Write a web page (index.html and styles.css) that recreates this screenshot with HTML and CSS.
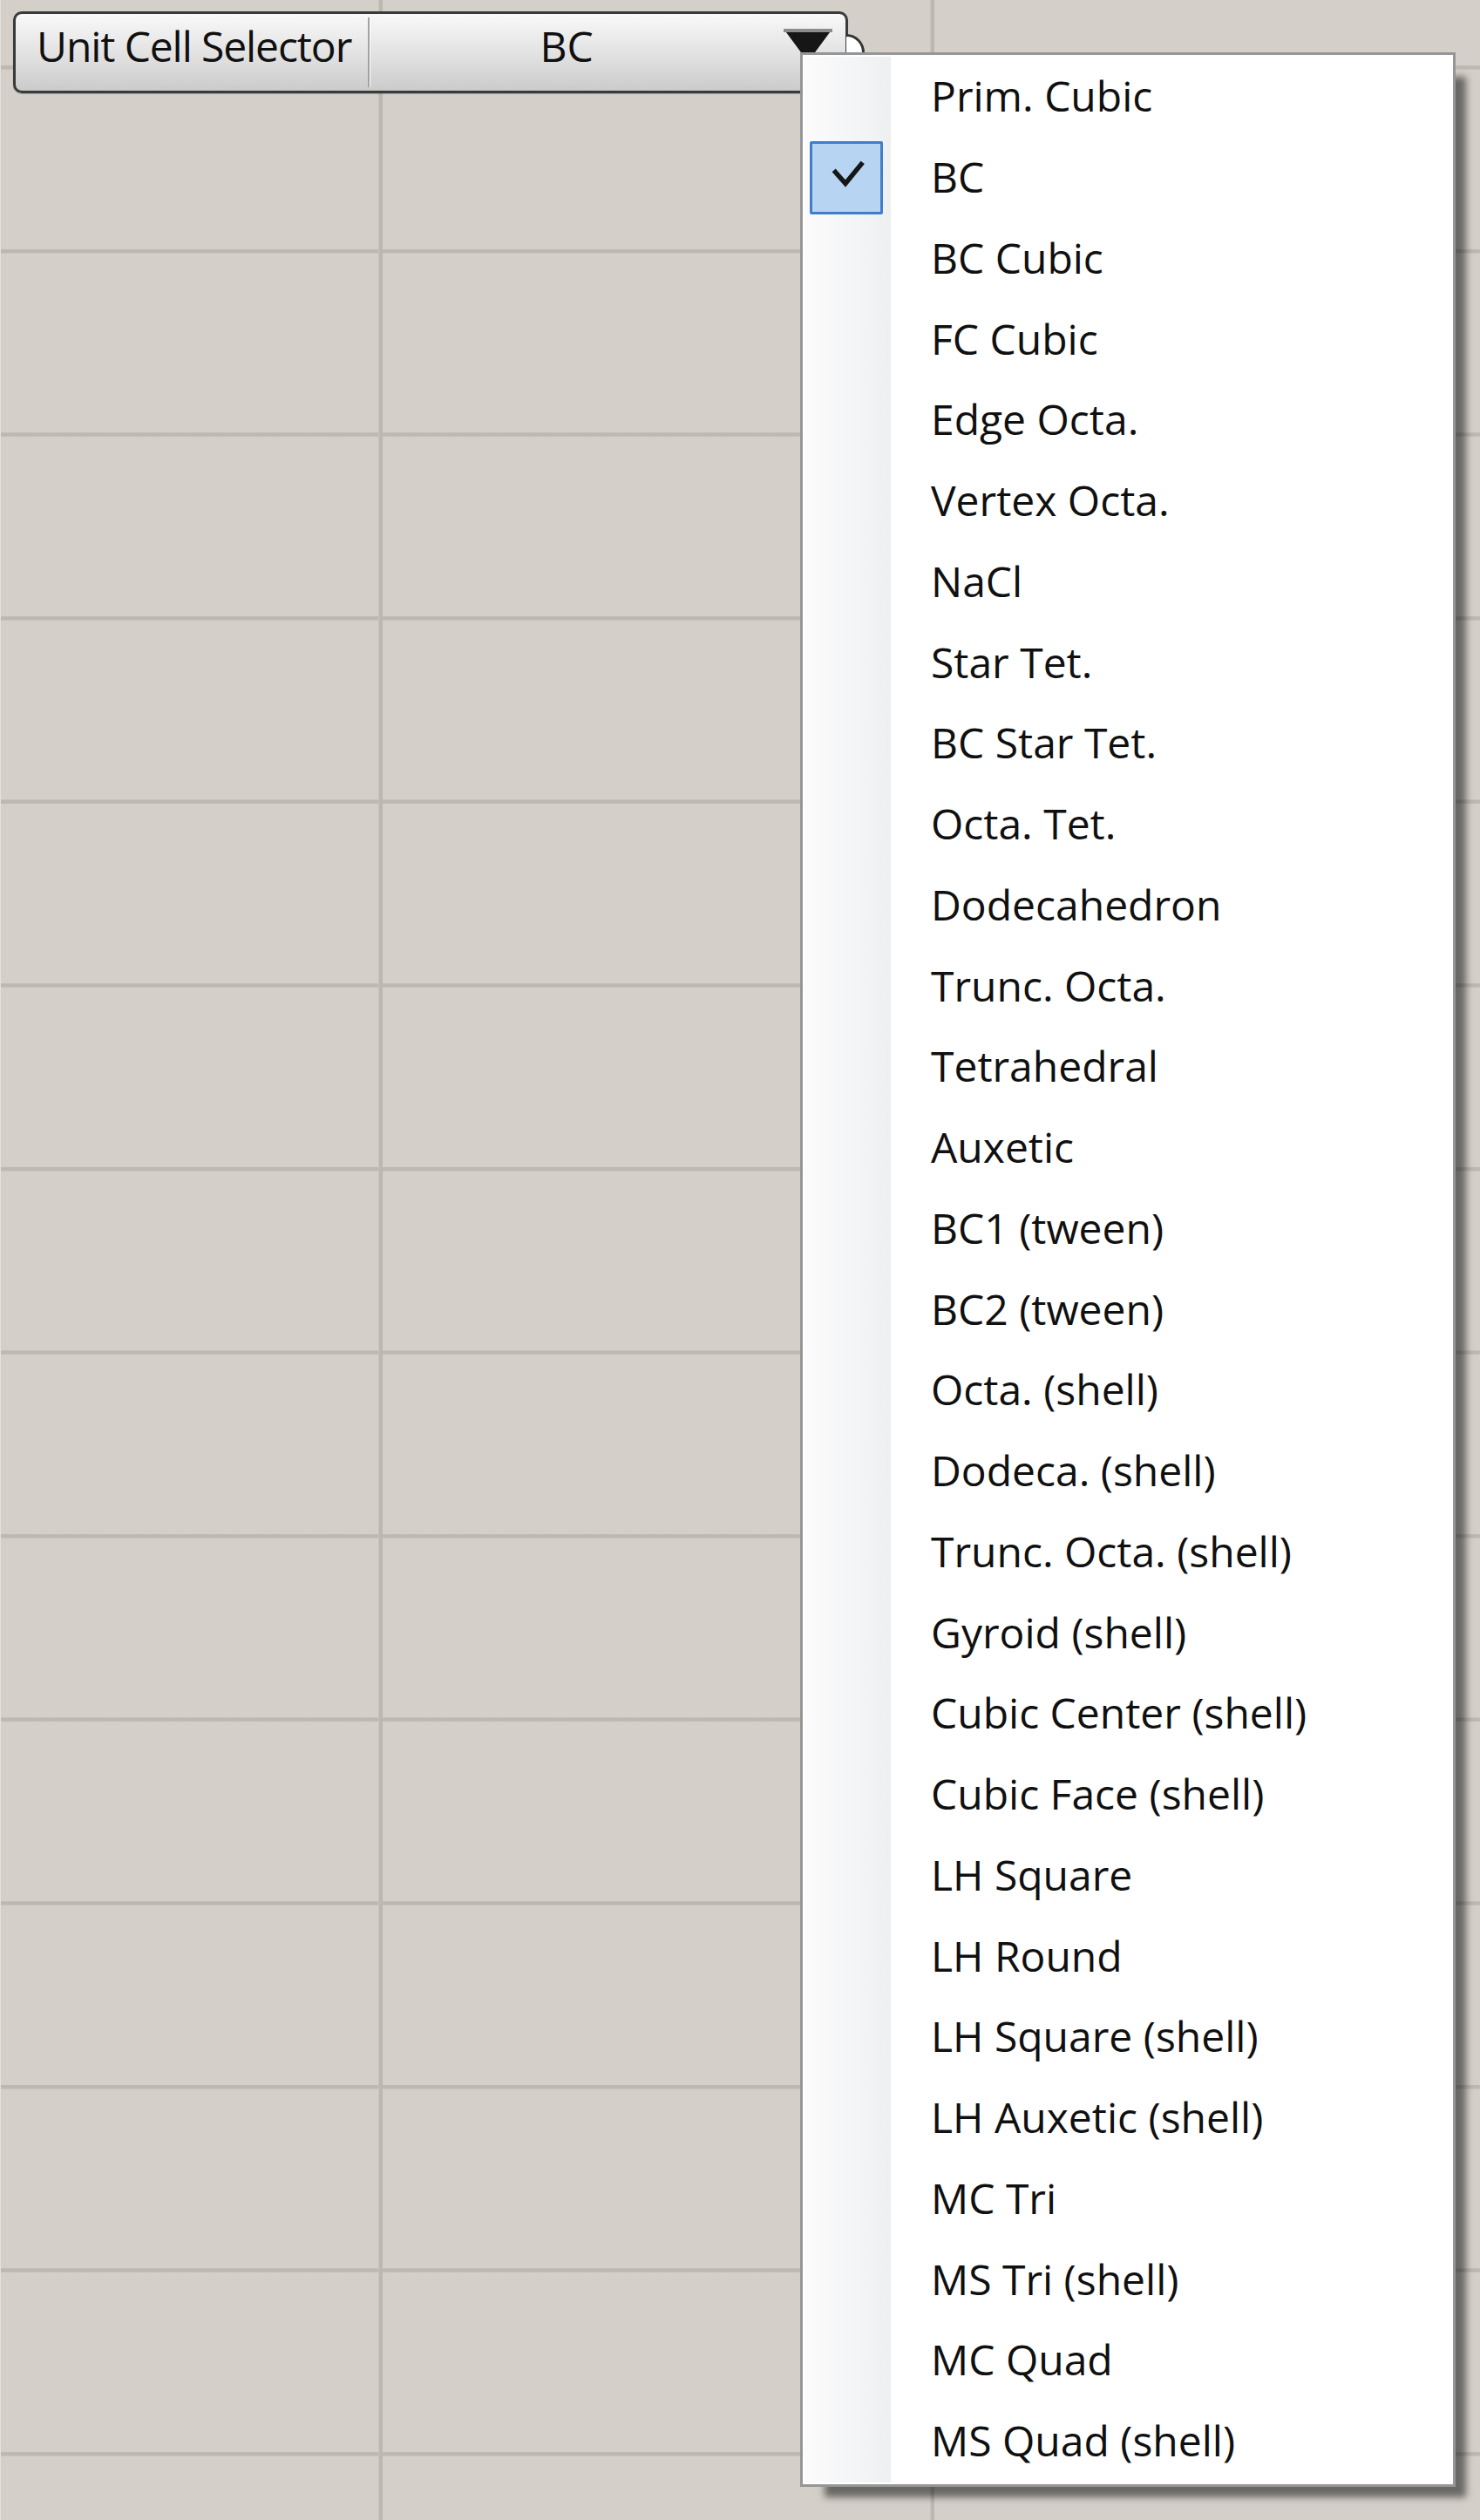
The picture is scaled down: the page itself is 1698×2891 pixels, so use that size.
FILE: index.html
```html
<!DOCTYPE html>
<html lang="en">
<head>
<meta charset="utf-8">
<title>Unit Cell Selector</title>
<link rel="stylesheet" href="styles.css">
</head>
<body>
<div class="canvas">
  <div class="component">
    <div class="comp-label">Unit Cell Selector</div>
    <div class="comp-divider"></div>
    <div class="comp-value">BC</div>
    <div class="comp-arrow">
      <svg width="56" height="38" viewBox="0 0 56 38">
        <polygon points="0,0 56,0 28,38" fill="#161616"/>
        <rect x="0" y="0" width="56" height="4" fill="#8c8c8c"/>
      </svg>
    </div>
    <div class="comp-knob"></div>
  </div>

  <div class="menu">
    <div class="item"><span class="gut"></span><span class="text">Prim. Cubic</span></div>
    <div class="item"><span class="gut"><span class="check"><svg width="78" height="78" viewBox="0 0 78 78"><polyline points="26.5,32.5 38,45.5 56,23.5" fill="none" stroke="#161616" stroke-width="5.5" stroke-linecap="square"/></svg></span></span><span class="text">BC</span></div>
    <div class="item"><span class="gut"></span><span class="text">BC Cubic</span></div>
    <div class="item"><span class="gut"></span><span class="text">FC Cubic</span></div>
    <div class="item"><span class="gut"></span><span class="text">Edge Octa.</span></div>
    <div class="item"><span class="gut"></span><span class="text">Vertex Octa.</span></div>
    <div class="item"><span class="gut"></span><span class="text">NaCl</span></div>
    <div class="item"><span class="gut"></span><span class="text">Star Tet.</span></div>
    <div class="item"><span class="gut"></span><span class="text">BC Star Tet.</span></div>
    <div class="item"><span class="gut"></span><span class="text">Octa. Tet.</span></div>
    <div class="item"><span class="gut"></span><span class="text">Dodecahedron</span></div>
    <div class="item"><span class="gut"></span><span class="text">Trunc. Octa.</span></div>
    <div class="item"><span class="gut"></span><span class="text">Tetrahedral</span></div>
    <div class="item"><span class="gut"></span><span class="text">Auxetic</span></div>
    <div class="item"><span class="gut"></span><span class="text">BC1 (tween)</span></div>
    <div class="item"><span class="gut"></span><span class="text">BC2 (tween)</span></div>
    <div class="item"><span class="gut"></span><span class="text">Octa. (shell)</span></div>
    <div class="item"><span class="gut"></span><span class="text">Dodeca. (shell)</span></div>
    <div class="item"><span class="gut"></span><span class="text">Trunc. Octa. (shell)</span></div>
    <div class="item"><span class="gut"></span><span class="text">Gyroid (shell)</span></div>
    <div class="item"><span class="gut"></span><span class="text">Cubic Center (shell)</span></div>
    <div class="item"><span class="gut"></span><span class="text">Cubic Face (shell)</span></div>
    <div class="item"><span class="gut"></span><span class="text">LH Square</span></div>
    <div class="item"><span class="gut"></span><span class="text">LH Round</span></div>
    <div class="item"><span class="gut"></span><span class="text">LH Square (shell)</span></div>
    <div class="item"><span class="gut"></span><span class="text">LH Auxetic (shell)</span></div>
    <div class="item"><span class="gut"></span><span class="text">MC Tri</span></div>
    <div class="item"><span class="gut"></span><span class="text">MS Tri (shell)</span></div>
    <div class="item"><span class="gut"></span><span class="text">MC Quad</span></div>
    <div class="item"><span class="gut"></span><span class="text">MS Quad (shell)</span></div>
  </div>
</div>
</body>
</html>
```

FILE: styles.css
```css
* { box-sizing: border-box; }

html, body {
  margin: 0;
  padding: 0;
}

body {
  width: 1698px;
  height: 2891px;
  overflow: hidden;
  font-family: "Open Sans", "Noto Sans", "DejaVu Sans", sans-serif;
  font-weight: 500;
  color: #101010;
}

.canvas {
  position: relative;
  width: 1698px;
  height: 2891px;
  padding: 13px 0 0 15px;
  background-color: #d4d0c9;
  background-image:
    linear-gradient(to right, #e4e1dc 0, #e4e1dc 1.5px, transparent 1.5px),
    linear-gradient(to right,
      transparent 434.5px, #cac6be 434.5px, #bcb8b0 435.5px, #bcb8b0 438.5px, #cac6be 439.5px, transparent 439.5px,
      transparent 1067.5px, #cac6be 1067.5px, #bcb8b0 1068.5px, #bcb8b0 1071.5px, #cac6be 1072.5px, transparent 1072.5px),
    repeating-linear-gradient(to bottom,
      transparent 0, transparent 74.9px,
      #cac6be 74.9px, #bdb9b1 75.9px, #bdb9b1 78.9px, #cac6be 79.9px,
      transparent 79.9px, transparent 210.6px);
}

/* Grasshopper value-list component */
.component {
  position: relative;
  width: 958px;
  height: 94px;
  display: flex;
  align-items: center;
  padding-bottom: 15px;
  border: 3px solid #3a3a3a;
  border-radius: 10px;
  background: linear-gradient(to bottom, #f8f8f8 0%, #ececec 30%, #dcdcdc 65%, #cbcbcb 100%);
  box-shadow: 0 1px 1px rgba(0, 0, 0, 0.25);
  font-size: 48px;
  line-height: normal;
  z-index: 2;
}

.comp-label {
  flex: 0 0 404px;
  padding-left: 24px;
  letter-spacing: -1.1px;
  white-space: nowrap;
}

.comp-divider {
  flex: 0 0 3px;
  align-self: stretch;
  margin: 4px 0 -11px 0;
  background: #a2a2a2;
  border-right: 1px solid #fdfdfd;
}

.comp-value {
  flex: 1 1 auto;
  text-align: center;
  white-space: nowrap;
}

.comp-arrow {
  flex: 0 0 95px;
  align-self: flex-start;
  padding-left: 24px;
  margin-top: 17px;
  height: 38px;
}

.comp-arrow svg {
  display: block;
}

.comp-knob {
  position: absolute;
  left: calc(100% + 1px);
  top: 50%;
  width: 21px;
  height: 42px;
  margin-top: -21px;
  border: 3px solid #333;
  border-left: none;
  border-radius: 0 21px 21px 0;
  background: #fff;
  z-index: 1;
}

/* Drop-down menu */
.menu {
  position: absolute;
  left: 918px;
  top: 60px;
  width: 752px;
  padding: 2px;
  border: 3px solid #969696;
  background:
    linear-gradient(to right, #fbfbfc 0%, #f4f5f6 60%, #eeeff1 100%) 2px 2px / 99px calc(100% - 4px) no-repeat,
    #ffffff;
  box-shadow: 20px 20px 8px -8px rgba(0, 0, 0, 0.5);
  font-size: 48px;
  z-index: 5;
}

.item {
  display: flex;
  align-items: center;
  height: 92.75px;
}

.gut {
  flex: 0 0 99px;
  display: flex;
  align-items: center;
  padding-left: 6px;
  height: 100%;
}

.check {
  display: block;
  width: 84px;
  height: 84px;
  border: 3px solid #3f7dcd;
  border-radius: 2px;
  background: #b7d5f2;
}

.check svg {
  display: block;
}

.text {
  margin-left: 46px;
  padding-bottom: 3px;
  white-space: nowrap;
}
```
